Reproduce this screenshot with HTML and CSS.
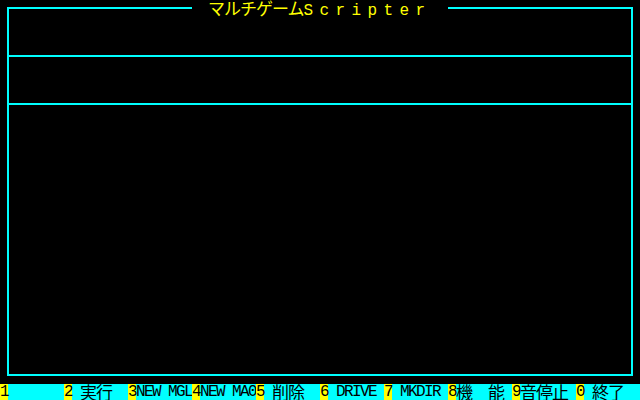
FILE: index.html
```html
<!DOCTYPE html>
<html lang="ja">
<head>
<meta charset="utf-8">
<title>マルチゲームScripter</title>
<link rel="stylesheet" href="styles.css">
</head>
<body>
<div class="screen">
  <div class="frame">
    <div class="frame-top">
      <div class="seg seg-left"></div>
      <div class="title"><span class="j">マルチゲーム</span><span class="wide">Scripter</span></div>
      <div class="seg seg-right"></div>
    </div>
    <div class="frame-body">
      <div class="pane pane-1"></div>
      <div class="pane pane-2"></div>
      <div class="pane pane-3"></div>
    </div>
  </div>
  <div class="fkeys">
    <div class="slot"><span class="key">1</span><span class="label"></span></div>
    <div class="slot"><span class="key">2</span><span class="label"> <span class="j">実行</span></span></div>
    <div class="slot"><span class="key">3</span><span class="label">NEW MGL</span></div>
    <div class="slot"><span class="key">4</span><span class="label">NEW MA0</span></div>
    <div class="slot"><span class="key">5</span><span class="label"> <span class="j">削除</span></span></div>
    <div class="slot"><span class="key">6</span><span class="label"> DRIVE</span></div>
    <div class="slot"><span class="key">7</span><span class="label"> MKDIR</span></div>
    <div class="slot"><span class="key">8</span><span class="label"><span class="j">機</span>  <span class="j">能</span></span></div>
    <div class="slot"><span class="key">9</span><span class="label"><span class="j">音停止</span></span></div>
    <div class="slot"><span class="key">0</span><span class="label"> <span class="j">終了</span></span></div>
  </div>
</div>
</body>
</html>
```

FILE: styles.css
```css
html, body {
  margin: 0;
  padding: 0;
  background: #000;
}

body {
  width: 640px;
  height: 400px;
  overflow: hidden;
  font-family: "Liberation Mono", "Noto Sans CJK JP", monospace;
  font-size: 16px;
  line-height: 16px;
}

.screen {
  width: 640px;
  height: 400px;
  display: flex;
  flex-direction: column;
}

.frame {
  margin: 0 7px;
  width: 626px;
  height: 376px;
  display: flex;
  flex-direction: column;
}

.frame-top {
  display: flex;
  height: 16px;
}

.seg {
  box-sizing: border-box;
  width: 185px;
  height: 9px;
  margin-top: 7px;
  border-top: 2px solid #00ffff;
}

.seg-left {
  border-left: 2px solid #00ffff;
}

.seg-right {
  border-right: 2px solid #00ffff;
}

.title {
  width: 224px;
  margin: 0 16px;
  height: 16px;
  color: #ffff00;
  white-space: pre;
}

.j {
  font-family: "Noto Sans CJK JP", sans-serif;
  font-size: 17px;
  letter-spacing: -1px;
}

.wide {
  letter-spacing: 6.4px;
}

.frame-body {
  flex: 1;
  box-sizing: border-box;
  border: 2px solid #00ffff;
  border-top: none;
  display: flex;
  flex-direction: column;
}

.pane-1 {
  height: 39px;
  border-bottom: 2px solid #00ffff;
}

.pane-2 {
  height: 46px;
  border-bottom: 2px solid #00ffff;
}

.pane-3 {
  flex: 1;
}

.fkeys {
  margin-top: 8px;
  height: 16px;
  background: #00ffff;
  display: flex;
  color: #000;
}

.slot {
  width: 64px;
  height: 16px;
  display: flex;
  white-space: pre;
}

.key {
  flex: none;
  width: 8px;
  height: 16px;
  background: #ffff00;
  letter-spacing: -1.6px;
}

.label {
  flex: none;
  width: 56px;
  height: 16px;
  letter-spacing: -1.6px;
}

.label .j {
  letter-spacing: -1px;
}
```
